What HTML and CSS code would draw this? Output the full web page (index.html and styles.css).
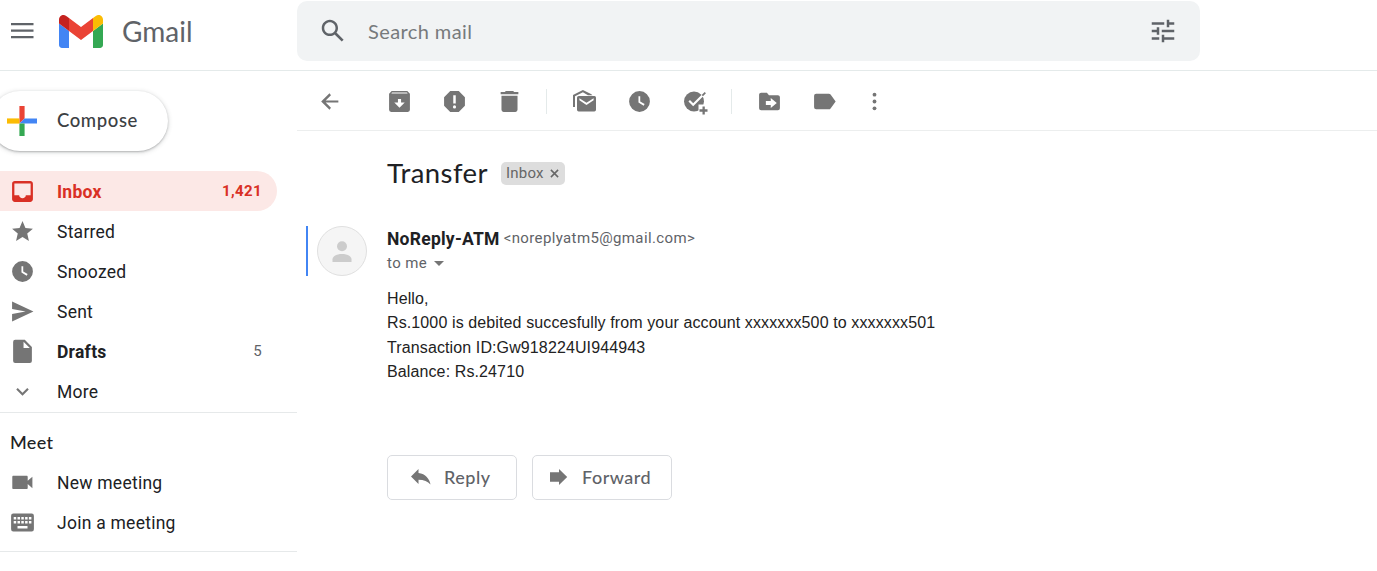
FILE: index.html
```html
<!DOCTYPE html>
<html lang="en">
<head>
<meta charset="utf-8">
<title>Gmail</title>
<link rel="stylesheet" href="styles.css">
</head>
<body>
<header class="header">
  <div class="brand">
    <svg class="menu" viewBox="0 0 24 18"><path d="M0 1h22.500v2.200H0zM0 7.500h22.500v2.200H0zM0 14h22.500v2.200H0z"/></svg>
    <svg class="logo" viewBox="52 42 88 66"><path fill="#4285f4" d="M58 108h14V74L52 59v43c0 3.320 2.690 6 6 6"/><path fill="#34a853" d="M120 108h14c3.320 0 6-2.690 6-6V59l-20 15"/><path fill="#fbbc04" d="M120 48v26l20-15v-8c0-7.420-8.470-11.650-14.400-7.200"/><path fill="#ea4335" d="M72 74V48l24 18 24-18v26L96 92"/><path fill="#c5221f" d="M52 51v8l20 15V48l-5.600-4.200c-5.940-4.450-14.400-.220-14.400 7.200"/></svg>
    <span class="wordmark">Gmail</span>
  </div>
  <div class="search">
    <svg class="search-icon" viewBox="0 0 24 24"><path d="M20.490 19l-5.730-5.730C15.530 12.200 16 10.910 16 9.500 16 5.910 13.090 3 9.500 3S3 5.910 3 9.500 5.910 16 9.500 16c1.410 0 2.700-.470 3.770-1.240L19 20.490 20.490 19zM5 9.500C5 7.010 7.010 5 9.500 5S14 7.010 14 9.500 11.990 14 9.500 14 5 11.990 5 9.500z"/></svg>
    <span class="placeholder">Search mail</span>
    <svg class="tune" viewBox="0 0 24 24"><path d="M3 17v2h6v-2H3zM3 5v2h10V5H3zm10 16v-2h8v-2h-8v-2h-2v6h2zM7 9v2H3v2h4v2h2V9H7zm14 4v-2H11v2h10zm-6-4h2V7h4V5h-4V3h-2v6z"/></svg>
  </div>
</header>
<div class="body">
  <aside class="sidebar">
    <div class="compose">
      <svg class="plus" viewBox="0 0 30 30"><path fill="#ea4335" d="M12.400 0h5.200v12.400L12.400 17.600z"/><path fill="#4285f4" d="M17.600 12.400H30v5.200H12.400z"/><path fill="#34a853" d="M12.400 17.600h5.200V30h-5.200z"/><path fill="#fbbc04" d="M0 12.400h12.400v5.200H0z"/></svg>
      <span class="compose-text">Compose</span>
    </div>
    <nav class="nav">
      <div class="item active"><svg class="icon" viewBox="0 0 24 24"><path d="M19.400 2H4.600C3.200 2 2 3.100 2 4.500v15C2 20.900 3.200 22 4.600 22h14.800c1.400 0 2.600-1.100 2.600-2.500v-15C22 3.100 20.800 2 19.400 2zm.4 13.700h-4.600c0 1.700-1.400 2.800-3.200 2.800s-3.200-1.100-3.200-2.800H4.200V4.200h15.600z"/></svg><span class="label">Inbox</span><span class="count">1,421</span></div>
      <div class="item"><svg class="icon" viewBox="0 0 24 24"><path d="M12 17.270L18.180 21l-1.640-7.030L22 9.240l-7.190-.610L12 2 9.190 8.630 2 9.240l5.460 4.730L5.820 21z"/></svg><span class="label">Starred</span></div>
      <div class="item"><svg class="icon" viewBox="0 0 24 24"><path fill-rule="evenodd" d="M12 2a10 10 0 1 0 0 20 10 10 0 0 0 0-20zm-1 5v6l5 3 .9-1.500-4.200-2.500V7z"/></svg><span class="label">Snoozed</span></div>
      <div class="item"><svg class="icon" viewBox="0 0 24 24"><path d="M2 21.500l20.500-9.500L2 2.500v7L15 12 2 14.500z"/></svg><span class="label">Sent</span></div>
      <div class="item bold"><svg class="icon" viewBox="0 0 24 24"><path fill-rule="evenodd" d="M5 .8h9.200L21 7.600V21a2 2 0 0 1-2 2H5a2 2 0 0 1-2-2V2.800a2 2 0 0 1 2-2zm8 1.800v6h6z"/></svg><span class="label">Drafts</span><span class="count">5</span></div>
      <div class="item"><svg class="icon" viewBox="0 0 24 24"><path d="M16.590 8.590L12 13.170 7.410 8.590 6 10l6 6 6-6z"/></svg><span class="label">More</span></div>
    </nav>
    <section class="meet">
      <h2 class="meet-title">Meet</h2>
      <div class="item"><svg class="icon" viewBox="0 0 24 24"><path d="M17 10.300V6.500c0-.550-.450-1-1-1H3.200c-.550 0-1 .450-1 1v10.800c0 .550.450 1 1 1H16c.550 0 1-.450 1-1v-3.800l4.500 4v-11z"/></svg><span class="label">New meeting</span></div>
      <div class="item"><svg class="icon" viewBox="0 0 25 25"><path fill-rule="evenodd" d="M3.300 3.500h18.400a2.200 2.200 0 0 1 2.200 2.200v13.600a2.200 2.200 0 0 1-2.200 2.200H3.300a2.200 2.200 0 0 1-2.200-2.200V5.700a2.200 2.200 0 0 1 2.200-2.200zM3.700 7v2.500h2.500V7zm3.800 0v2.500H10V7zm3.800 0v2.500h2.500V7zm3.800 0v2.500h2.500V7zm3.800 0v2.500h2.500V7zM3.700 10.900v2.500h2.500v-2.500zm3.800 0v2.500H10v-2.500zm3.800 0v2.500h2.500v-2.500zm3.800 0v2.500h2.500v-2.500zm3.800 0v2.500h2.500v-2.500zM7.500 16v2.500h10V16z"/></svg><span class="label">Join a meeting</span></div>
    </section>
  </aside>
  <main class="main">
    <div class="toolbar">
      <svg class="icon back" viewBox="0 0 24 24"><path d="M20.500 11H8.330l5.090-5.090L12 4l-8 8 8 8 1.410-1.910L8.330 13H20.500z"/></svg>
      <div class="tools">
        <svg class="icon" viewBox="0 0 24 24"><path fill-rule="evenodd" d="M4.500 2h15L22 4.600V20a2 2 0 0 1-2 2H4a2 2 0 0 1-2-2V4.600zM4.200 4.200h15.600l-.6-.8H4.800zM10.500 9.500V13H7l5 5 5-5h-3.500V9.500z"/></svg>
        <svg class="icon" viewBox="0 0 24 24"><path fill-rule="evenodd" d="M7.900 2h8.200L22 7.900v8.200L16.100 22H7.900L2 16.100V7.900zM10.800 6v8h2.400V6zM12 15.700a1.500 1.500 0 1 0 0 3 1.500 1.500 0 0 0 0-3z"/></svg>
        <svg class="icon" viewBox="0 0 24 24"><path d="M8.500 2h7l1 .8h4V5h-17V2.800h4zM4.300 6.400h15.400V20a2 2 0 0 1-2 2H6.300a2 2 0 0 1-2-2z"/></svg>
      </div>
      <span class="divider"></span>
      <div class="tools">
        <svg class="icon" viewBox="0 0 25 25"><path fill-rule="evenodd" d="M1 18V6l9.900-5L19 5l1.500 1.300H16L10.900 3.300 3 7.300V18zM7 7h15.500A1.700 1.700 0 0 1 24 8.700v12.100a1.700 1.700 0 0 1-1.700 1.700H6.700A1.700 1.700 0 0 1 5 20.800V8.700A1.700 1.700 0 0 1 6.700 7zm.4 2.200v2l7.100 4.700 7.100-4.700v-2l-7.100 4.500z"/></svg>
        <svg class="icon" viewBox="0 0 24 24"><path fill-rule="evenodd" d="M12 2a10 10 0 1 0 0 20 10 10 0 0 0 0-20zm-1 5v6l5 3 .9-1.500-4.200-2.500V7z"/></svg>
        <svg class="icon task" viewBox="0 0 25 25"><circle cx="12" cy="12.500" r="10"/><path fill="none" stroke="#fff" stroke-width="2.200" d="M7.200 11.700l4 4L22.700 4.200"/><path fill="none" stroke="#757575" stroke-width="1.800" d="M20.300 6.600l3-3"/><path fill="#fff" d="M16.500 15.500h5.500v6h-5.500z"/><path d="M20.500 17.600h2.300v2.700h2.700v2.400h-2.700v2.700h-2.300v-2.700h-3v-2.400h3z"/></svg>
      </div>
      <span class="divider"></span>
      <div class="tools">
        <svg class="icon" viewBox="0 0 24 24"><path fill-rule="evenodd" d="M9.500 3.500H4c-1.100 0-2 .9-2 2v13a2 2 0 0 0 2 2h16a2 2 0 0 0 2-2V8c0-1.100-.9-2-2-2h-8.500zm3.700 5.100l5.800 4.800-5.800 4.800V15.300H8.500v-3.800h4.700z"/></svg>
        <svg class="icon" viewBox="0 0 24 24"><path d="M17.830 5.340C17.470 4.830 16.870 4.500 16.200 4.500H4a2 2 0 0 0-2 2v11a2 2 0 0 0 2 2h12.200c.670 0 1.270-.330 1.630-.840L22.700 12z"/></svg>
        <svg class="icon more-icon" viewBox="0 0 25 25"><circle cx="12.500" cy="5.700" r="1.900"/><circle cx="12.500" cy="12.500" r="1.900"/><circle cx="12.500" cy="19.300" r="1.900"/></svg>
      </div>
    </div>
    <div class="subject">
      <h1 class="title">Transfer</h1>
      <span class="chip"><span>Inbox</span><svg class="chip-x" viewBox="0 0 10 10"><path d="M1 1l8 8M9 1L1 9"/></svg></span>
    </div>
    <article class="message">
      <div class="rail"></div>
      <svg class="avatar" viewBox="0 0 50 50"><circle cx="25" cy="25" r="24.500" fill="#f5f5f5" stroke="#e0e0e0"/><circle cx="25" cy="20.300" r="5" fill="#ccc"/><path fill="#ccc" d="M15.500 36v-2.700c0-3.600 5.400-5.300 9.500-5.300s9.500 1.700 9.500 5.300V36z"/></svg>
      <div class="content">
        <div class="from"><span class="sender">NoReply-ATM</span><span class="email">&lt;noreplyatm5@gmail.com&gt;</span></div>
        <div class="to"><span>to me</span><svg class="caret" viewBox="0 0 10 5"><path d="M0 0h10L5 5z"/></svg></div>
        <div class="text">Hello,<br>Rs.1000 is debited succesfully from your account xxxxxxx500 to xxxxxxx501<br>Transaction ID:Gw918224UI944943<br>Balance: Rs.24710</div>
        <div class="actions">
          <div class="button reply"><svg class="action-icon" viewBox="0 0 20 16"><path d="M7.500 4V0L0 7.500 7.500 15v-4.300c5.500 0 9.300 1.500 12 4.800C18.500 10 14.500 4.800 7.500 4z"/></svg><span>Reply</span></div>
          <div class="button forward"><svg class="action-icon" viewBox="0 0 20 16"><path d="M1 3.300h9V0l8.200 8L10 16v-3.300H1z"/></svg><span>Forward</span></div>
        </div>
      </div>
    </article>
  </main>
</div>
</body>
</html>
```
FILE: styles.css
```css
* { box-sizing: border-box; }
body { margin: 0; width: 1377px; height: 571px; overflow: hidden; background: #fff; color: #202124; font-family: Roboto, sans-serif; }
svg { display: block; flex: none; overflow: visible; }
span { white-space: nowrap; }
.header { display: flex; height: 71px; padding-top: 1px; border-bottom: 1px solid #e4eaea; }
.brand { display: flex; width: 297px; height: 60px; padding-left: 11px; align-items: center; }
.menu { width: 24px; height: 18px; fill: #5f6368; }
.logo { width: 44px; height: 33px; margin-left: 24px; }
.wordmark { margin-left: 19px; font: 28px/36px Lato, sans-serif; color: #5f6368; }
.search { display: flex; width: 903px; height: 60px; padding: 0 22px 0 21px; align-items: center; background: #f1f3f4; border-radius: 10px; }
.search-icon { width: 30px; height: 30px; fill: #5f6368; }
.placeholder { flex: 1; margin-left: 20px; font: 20px/26px Lato, sans-serif; letter-spacing: .4px; color: #777a7c; }
.tune { width: 30px; height: 30px; fill: #5f6368; }
.body { display: flex; height: 500px; }
.sidebar { width: 297px; padding-top: 20px; }
.compose { display: flex; align-items: center; width: 178px; height: 60px; margin-left: -10px; padding-left: 17px; border-radius: 30px; background: #fff; box-shadow: 0 1px 2px rgba(60,64,67,.3), 0 1px 4px 1px rgba(60,64,67,.15); }
.plus { width: 30px; height: 30px; }
.compose-text { margin-left: 20px; padding-bottom: 2px; font: 500 18.500px/24px Lato, sans-serif; letter-spacing: .6px; color: #3c4043; }
.nav { margin-top: 20px; height: 242px; border-bottom: 1px solid #e6e9ea; }
.item { display: flex; align-items: center; width: 277px; height: 40px; padding: 0 15px 0 10px; font-size: 17.500px; letter-spacing: .25px; }
.icon { width: 25px; height: 25px; fill: #757575; }
.label { flex: 1; margin-left: 22px; padding-top: 1px; }
.count { font-size: 15px; letter-spacing: .4px; color: #5f6368; }
.active { background: #fce8e6; border-radius: 0 20px 20px 0; color: #d93025; font-weight: 700; }
.active .icon { fill: #d93025; }
.active .count { color: #d93025; }
.bold { font-weight: 700; }
.bold .count { font-weight: 400; }
.meet { height: 139px; border-bottom: 1px solid #e6e9ea; }
.meet-title { height: 49px; margin: 0; padding: 17px 10px 0; font: 500 18px/24px Lato, sans-serif; letter-spacing: .3px; }
.main { width: 1080px; }
.toolbar { display: flex; align-items: center; height: 60px; padding-left: 20px; padding-top: 1px; border-bottom: 1px solid #eceeee; }
.tools { display: flex; gap: 30px; }
.back { margin-right: 45px; }
.divider { width: 1px; height: 25px; margin: 0 25px 0 24px; background: #e4eaea; }
.more-icon { margin-left: -5px; }
.subject { display: flex; height: 95px; padding: 24px 0 0 90px; align-items: flex-start; }
.title { width: 114px; margin: 0; font: 400 27.500px/36px Lato, sans-serif; letter-spacing: .4px; }
.chip { display: flex; width: 64px; height: 23px; margin-top: 7px; padding: 0 6px 1px 5px; align-items: center; justify-content: space-between; border-radius: 5px; background: #ddd; color: #666; font-size: 15px; letter-spacing: .2px; }
.chip-x { width: 9px; height: 9px; fill: none; stroke: #666; stroke-width: 1.700; }
.message { display: flex; height: 290px; padding-left: 9px; }
.rail { width: 2px; height: 50px; background: #4285f4; }
.avatar { width: 50px; height: 50px; margin: 0 20px 0 9px; }
.from { display: flex; height: 25px; align-items: center; }
.sender { font-size: 17.500px; font-weight: 700; letter-spacing: .25px; }
.email { margin-left: 4px; padding-bottom: 1px; font-size: 15px; letter-spacing: .370px; color: #5f6368; }
.to { display: flex; height: 24px; align-items: center; font-size: 15px; letter-spacing: .370px; color: #5f6368; }
.caret { width: 10px; height: 5px; margin-left: 7px; fill: #757575; }
.text { margin-top: 12px; font: 16px/24.400px "Liberation Sans", sans-serif; letter-spacing: .115px; color: #222; }
.actions { display: flex; gap: 15px; margin-top: 70px; }
.button { display: flex; align-items: center; height: 45px; padding-bottom: 1px; border: 1px solid #dadce0; border-radius: 5px; font: 500 18px/24px Lato, sans-serif; letter-spacing: .5px; color: #5f6368; }
.reply { width: 130px; padding-left: 23px; }
.forward { width: 140px; padding-left: 16px; }
.action-icon { width: 20px; height: 16px; margin-right: 13px; fill: #757575; }
```
